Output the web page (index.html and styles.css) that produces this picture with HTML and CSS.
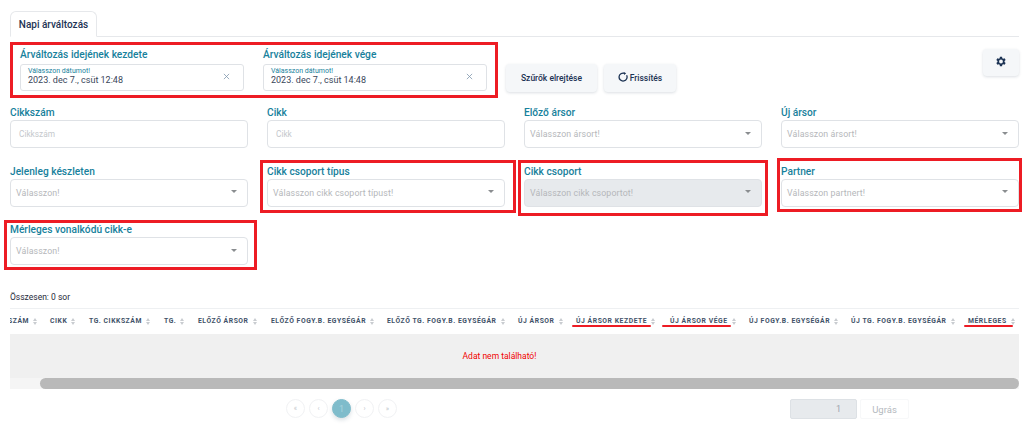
FILE: index.html
```html
<!DOCTYPE html>
<html lang="hu">
<head>
<meta charset="utf-8">
<title>Napi árváltozás</title>
<link rel="stylesheet" href="styles.css">
</head>
<body>
<main class="page">
  <nav class="tabs"><span class="tab">Napi árváltozás</span></nav>

  <section class="date-row">
    <div class="date-field">
      <label class="label">Árváltozás idejének kezdete</label>
      <div class="date-input">
        <div class="date-text"><small>Válasszon dátumot!</small><span>2023. dec 7., csüt 12:48</span></div>
        <svg class="clear" viewBox="0 0 8 8"><path d="M1 1l6 6M7 1L1 7"/></svg>
      </div>
    </div>
    <div class="date-field">
      <label class="label">Árváltozás idejének vége</label>
      <div class="date-input">
        <div class="date-text"><small>Válasszon dátumot!</small><span>2023. dec 7., csüt 14:48</span></div>
        <svg class="clear" viewBox="0 0 8 8"><path d="M1 1l6 6M7 1L1 7"/></svg>
      </div>
    </div>
    <button class="btn btn-hide">Szűrők elrejtése</button>
    <button class="btn btn-refresh">
      <svg class="refresh" viewBox="0 0 10 10"><path d="M8.6 3.2A4 4 0 1 1 6.4 1.3"/><path class="fill" d="M5.6 0l2.6 1.3-2 1.8z"/></svg>
      Frissítés
    </button>
    <button class="btn btn-gear" aria-label="Beállítások">
      <svg class="gear" viewBox="0 0 24 24"><path d="M19.4 13a7.5 7.5 0 0 0 0-2l2.1-1.6-2-3.5-2.5 1a7.5 7.5 0 0 0-1.7-1L14.9 3.2h-4l-.4 2.7a7.5 7.5 0 0 0-1.7 1l-2.5-1-2 3.5L6.4 11a7.5 7.5 0 0 0 0 2l-2.1 1.6 2 3.5 2.5-1a7.5 7.5 0 0 0 1.7 1l.4 2.7h4l.4-2.7a7.5 7.5 0 0 0 1.7-1l2.5 1 2-3.5zM12.9 15.5a3.5 3.5 0 1 1 0-7 3.5 3.5 0 0 1 0 7z"/></svg>
    </button>
  </section>

  <section class="filters">
    <div class="field"><label class="label">Cikkszám</label><div class="control text-control">Cikkszám</div></div>
    <div class="field"><label class="label">Cikk</label><div class="control text-control">Cikk</div></div>
    <div class="field"><label class="label">Előző ársor</label><div class="control">Válasszon ársort!<i class="caret"></i></div></div>
    <div class="field"><label class="label">Új ársor</label><div class="control">Válasszon ársort!<i class="caret"></i></div></div>
    <div class="field"><label class="label">Jelenleg készleten</label><div class="control">Válasszon!<i class="caret"></i></div></div>
    <div class="field"><label class="label">Cikk csoport típus</label><div class="control">Válasszon cikk csoport típust!<i class="caret"></i></div></div>
    <div class="field"><label class="label">Cikk csoport</label><div class="control disabled">Válasszon cikk csoportot!<i class="caret"></i></div></div>
    <div class="field"><label class="label">Partner</label><div class="control">Válasszon partnert!<i class="caret"></i></div></div>
    <div class="field"><label class="label">Mérleges vonalkódú cikk-e</label><div class="control">Válasszon!<i class="caret"></i></div></div>
  </section>

  <p class="total">Összesen: 0 sor</p>

  <section class="table">
    <div class="thead">
      <span class="th w-szam">SZÁM<i class="sort"></i></span>
      <span class="th w-cikk">CIKK<i class="sort"></i></span>
      <span class="th w-tgc">TG. CIKKSZÁM<i class="sort"></i></span>
      <span class="th w-tg">TG.<i class="sort"></i></span>
      <span class="th w-ea">ELŐZŐ ÁRSOR<i class="sort"></i></span>
      <span class="th w-ef">ELŐZŐ FOGY.B. EGYSÉGÁR<i class="sort"></i></span>
      <span class="th w-et">ELŐZŐ TG. FOGY.B. EGYSÉGÁR<i class="sort"></i></span>
      <span class="th w-ua">ÚJ ÁRSOR<i class="sort"></i></span>
      <span class="th w-uk">ÚJ ÁRSOR KEZDETE<i class="sort"></i></span>
      <span class="th w-uv">ÚJ ÁRSOR VÉGE<i class="sort"></i></span>
      <span class="th w-uf">ÚJ FOGY.B. EGYSÉGÁR<i class="sort"></i></span>
      <span class="th w-ut">ÚJ TG. FOGY.B. EGYSÉGÁR<i class="sort"></i></span>
      <span class="th w-me">MÉRLEGES<i class="sort"></i></span>
    </div>
    <div class="tbody">Adat nem található!</div>
    <div class="scrollbar"><div class="thumb"></div></div>
  </section>

  <section class="pager">
    <div class="pages">
      <span class="page-btn">«</span>
      <span class="page-btn">‹</span>
      <span class="page-btn current">1</span>
      <span class="page-btn">›</span>
      <span class="page-btn">»</span>
    </div>
    <div class="jump">
      <span class="jump-input">1</span>
      <span class="jump-btn">Ugrás</span>
    </div>
  </section>
</main>

<div class="mark m-dates"></div>
<div class="mark m-type"></div>
<div class="mark m-group"></div>
<div class="mark m-partner"></div>
<div class="mark m-scale"></div>
<div class="line l-start"></div>
<div class="line l-end"></div>
<div class="line l-scale"></div>
</body>
</html>
```
FILE: styles.css
```css
* { box-sizing: border-box; }
html, body { margin: 0; padding: 0; background: #fff; }
body { width: 1024px; height: 444px; overflow: hidden; position: relative; font-family: Roboto, "Liberation Sans", sans-serif; color: #1c3354; }
.page { padding: 11px 5px 0 10px; }

.tabs { height: 26px; border-bottom: 1px solid #e6e8eb; display: flex; }
.tab { width: 87px; height: 26px; border: 1px solid #e6e8eb; border-bottom-color: #fff; border-radius: 6px 6px 0 0; font-size: 10px; font-weight: 500; color: #1c3354; display: flex; align-items: center; justify-content: center; }

.label { display: block; height: 13px; line-height: 13px; font-size: 10.2px; font-weight: 500; color: #17819c; white-space: nowrap; }

.date-row { display: flex; align-items: flex-start; margin-top: 11px; padding-left: 10px; height: 56px; }
.date-field { width: 224px; margin-right: 19px; }
.date-row .label { margin-bottom: 2px; height: 14px; line-height: 14px; }
.date-input { height: 27px; border: 1px solid #dfe2e6; border-radius: 3px; display: flex; align-items: center; justify-content: space-between; padding: 0 13px 0 7px; }
.date-text { display: flex; flex-direction: column; padding-bottom: 2px; }
.date-text small { font-size: 7px; line-height: 7px; color: #17819c; }
.date-text span { font-size: 9px; line-height: 11px; color: #39465a; }
.clear { width: 7px; height: 7px; fill: none; stroke: #7f97ac; stroke-width: .9; margin-bottom: 3px; }

.btn { border: 0; background: #f5f7f9; border-radius: 4px; box-shadow: 0 1px 3px rgba(30,50,80,.16); font: 500 8.5px Roboto, sans-serif; color: #1c3354; display: flex; align-items: center; justify-content: center; height: 28px; padding: 0 0 1px; }
.btn-hide { width: 91px; margin-top: 16px; margin-right: 7px; }
.btn-refresh { width: 72px; margin-top: 16px; gap: 2px; }
.btn-gear { width: 36px; height: 27px; margin-top: 1px; margin-left: auto; padding: 0 2px 3px 0; }
.refresh { width: 10px; height: 10px; fill: none; stroke: #1c3354; stroke-width: 1.3; margin-bottom: 1px; }
.refresh .fill { fill: #1c3354; stroke: none; }
.gear { width: 13px; height: 13px; fill: #1c3354; }

.filters { display: grid; grid-template-columns: repeat(4, 238px); column-gap: 19px; row-gap: 16.5px; margin-top: 2px; }
.filters .label { margin-bottom: 1px; }
.control { height: 28px; border: 1px solid #dfe2e6; border-radius: 4px; padding: 0 5px; font-size: 8.8px; color: #b5b7ba; display: flex; align-items: center; justify-content: space-between; letter-spacing: .1px; }
.text-control { font-size: 8.3px; padding-left: 8px; color: #c4c8cc; letter-spacing: 0; }
.control.disabled { background: #e7eaed; }
.caret { width: 0; height: 0; border-left: 3.5px solid transparent; border-right: 3.5px solid transparent; border-top: 3.5px solid #8a8d90; margin-right: 5px; margin-bottom: 2px; }

.total { margin: 26px 0 0; height: 12px; line-height: 12px; font-size: 8.5px; color: #1f2a3a; }

.table { margin-top: 5px; width: 1009px; overflow: hidden; }
.thead { height: 26px; border-top: 1px solid #eef0f2; display: flex; align-items: center; white-space: nowrap; overflow: hidden; }
.th { flex: none; display: flex; align-items: center; font-size: 6.8px; font-weight: 700; letter-spacing: .55px; color: #3f5268; padding-bottom: 1px; }
.sort { width: 4px; height: 7px; margin-left: 4px; flex: none; position: relative; }
.sort::before, .sort::after { content: ""; position: absolute; left: 0; border-left: 2px solid transparent; border-right: 2px solid transparent; }
.sort::before { top: 0; border-bottom: 3px solid #c9ccd0; }
.sort::after { bottom: 0; border-top: 3px solid #c9ccd0; }
.w-szam { width: 40px; justify-content: flex-end; padding-right: 13px; }
.w-cikk { width: 39px; }
.w-tgc { width: 75px; }
.w-tg { width: 34px; }
.w-ea { width: 73px; }
.w-ef { width: 116px; }
.w-et { width: 131px; }
.w-ua { width: 58px; }
.w-uk { width: 94px; }
.w-uv { width: 79px; }
.w-uf { width: 102px; }
.w-ut { width: 117px; }
.w-me { width: 51px; }

.tbody { height: 44px; background: #f0f0f0; display: flex; align-items: center; justify-content: center; font-size: 8.5px; color: #f00000; padding: 0 30px 1px 0; }
.scrollbar { height: 11px; background: #f5f5f5; padding-left: 30px; }
.thumb { height: 11px; background: #b9b9b9; border-radius: 6px; }

.pager { position: relative; display: flex; height: 20px; margin-top: 10px; padding-left: 276px; }
.pages { display: flex; gap: 4px; }
.page-btn { width: 19px; height: 19px; border: 1px solid #f1f2f4; border-radius: 50%; display: flex; align-items: center; justify-content: center; font-size: 7px; color: #c3c7cc; }
.page-btn.current { background: #7fbccb; border-color: #7fbccb; color: #a8d4de; font-size: 9px; box-shadow: 0 2px 4px rgba(60,90,110,.2); }
.jump { display: flex; gap: 3px; margin-left: 393px; }
.jump-input { width: 67px; height: 20px; background: #e7eaed; border: 1px solid #dde1e5; border-radius: 2px; font-size: 9px; color: #9ea5ad; display: flex; align-items: center; justify-content: flex-end; padding-right: 15px; }
.jump-btn { width: 49px; height: 20px; border: 1px solid #f7f8f9; border-radius: 2px; font-size: 9.5px; color: #b4b9be; display: flex; align-items: center; justify-content: center; }

.mark { position: absolute; border: 3px solid #ed1c24; pointer-events: none; }
.m-dates { left: 10px; top: 42px; width: 488px; height: 56px; }
.m-type { left: 260px; top: 160px; width: 256px; height: 53px; }
.m-group { left: 518px; top: 160px; width: 250px; height: 56px; }
.m-partner { left: 777px; top: 158px; width: 245px; height: 54px; }
.m-scale { left: 4px; top: 220px; width: 253px; height: 50px; }
.line { position: absolute; height: 2px; background: #ed1c24; border-radius: 1px; }
.l-start { left: 572px; top: 325px; width: 79px; }
.l-end { left: 662px; top: 325px; width: 69px; }
.l-scale { left: 964px; top: 325px; width: 49px; }
```
